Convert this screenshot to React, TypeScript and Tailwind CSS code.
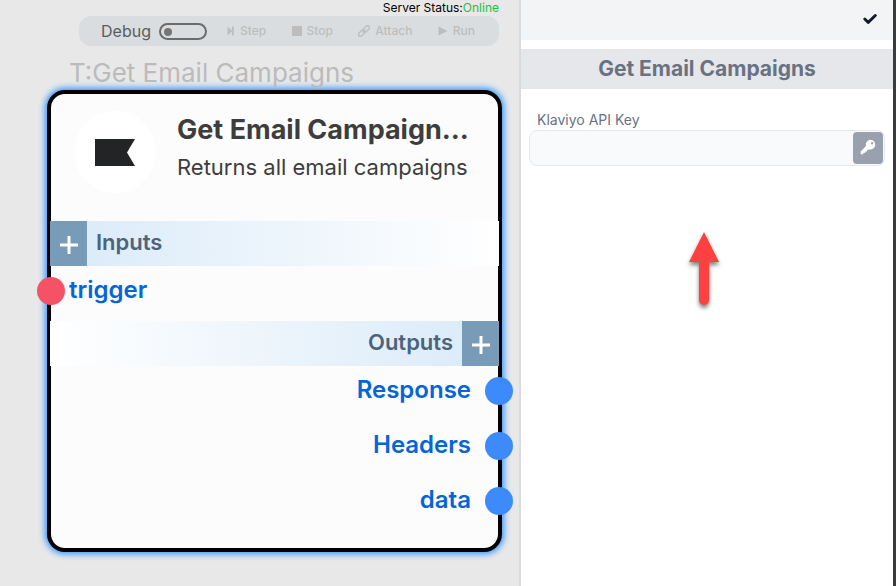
import type { ReactNode } from "react";
import { FaCheck } from "react-icons/fa6";

function StepIcon() {
  return (
    <svg viewBox="0 0 8 10" className="h-2.5 w-2" fill="currentColor">
      <path d="M0.500 0.500 5.500 5 0.500 9.500zM5 0.500h1.800v9H5z" />
    </svg>
  );
}

function StopIcon() {
  return (
    <svg viewBox="0 0 10 10" className="size-2.5" fill="currentColor">
      <path d="M0 0h10v10H0z" />
    </svg>
  );
}

function AttachIcon() {
  return (
    <svg viewBox="0 0 12 12" className="size-3" fill="none" stroke="currentColor" strokeWidth="1.3">
      <rect x="4.600" y="1.800" width="7.400" height="4" rx="2" transform="rotate(-45 8.300 3.800)" />
      <rect x="0" y="6.200" width="7.400" height="4" rx="2" transform="rotate(-45 3.700 8.200)" />
      <path d="M4.500 7.500l3-3" />
    </svg>
  );
}

function RunIcon() {
  return (
    <svg viewBox="0 0 10 10" className="size-2.5" fill="currentColor">
      <path d="M0.500 0.500 9.500 5 0.500 9.500z" />
    </svg>
  );
}

function KeyIcon() {
  return (
    <svg viewBox="0 0 16 16" className="size-4" fill="currentColor" fillRule="evenodd">
      <path d="M10.500 0.800a4.900 4.900 0 1 1-1.600 9.600L7.300 11.100 7 12.400 5.600 12.600 5.200 13.800 3.600 14 2.900 15.200H0.700V12.600L6 6.900A4.900 4.900 0 0 1 10.500 0.800zM12.100 3a1.200 1.200 0 1 0 0.010 0z" />
    </svg>
  );
}

const tools: { label: string; icon: ReactNode }[] = [
  { label: "Step", icon: <StepIcon /> },
  { label: "Stop", icon: <StopIcon /> },
  { label: "Attach", icon: <AttachIcon /> },
  { label: "Run", icon: <RunIcon /> },
];

const outputs = ["Response", "Headers", "data"];

function Toolbar() {
  return (
    <div className="flex h-[30px] items-center rounded-xl bg-[#d9dde0] pr-6 pl-[22px]">
      <label className="flex items-center gap-2 text-base text-[#5c5c5c]">
        Debug
        <input
          type="checkbox"
          role="switch"
          className="h-[17px] w-12 appearance-none rounded-full border-2 border-[#6b6b6b] before:m-[3px] before:block before:size-2 before:rounded-full before:bg-[#757575]"
        />
      </label>
      <div className="flex flex-1 items-center justify-between pl-5">
        {tools.map((tool) => (
          <button
            key={tool.label}
            type="button"
            disabled
            className="flex items-center gap-[5px] text-xs font-medium text-[#bdbdbd]"
          >
            {tool.icon}
            {tool.label}
          </button>
        ))}
      </div>
    </div>
  );
}

function AddButton({ label }: { label: string }) {
  return (
    <button
      type="button"
      aria-label={label}
      className="flex h-full w-[37px] items-center justify-center bg-[#789bb7] pt-0.5 text-white"
    >
      <svg viewBox="0 0 18 18" className="size-[18px]" fill="none" stroke="currentColor" strokeWidth="3">
        <path d="M9 0v18M0 9h18" />
      </svg>
    </button>
  );
}

function NodeCard() {
  return (
    <article className="h-[462px] rounded-[18px] border-4 border-black bg-[#fcfcfc] shadow-[0_0_6px_2px_#2f95ff]">
      <header className="flex h-[127px] items-start gap-[21px] pt-[17px] pr-5 pl-[23px]">
        <div className="flex size-[82px] shrink-0 items-center justify-center rounded-full bg-white">
          <svg viewBox="0 0 40 27" className="h-[27px] w-10" fill="#232426">
            <path d="M0 0h40l-8 13.500 8 13.500H0z" />
          </svg>
        </div>
        <div className="min-w-0 text-[#3d3d3d]">
          <h2 className="text-[27px] leading-[38px] font-bold">Get Email Campaign...</h2>
          <p className="text-[22px] leading-9">Returns all email campaigns</p>
        </div>
      </header>
      <section>
        <div className="-mx-px flex h-[45px] items-center gap-[9px] bg-linear-to-r from-[#d9eaf8] to-white">
          <AddButton label="Add input" />
          <h3 className="pb-0.5 text-[22px] font-semibold text-[#4c647b]">Inputs</h3>
        </div>
        <div className="-ml-[14px] flex h-[50px] items-center gap-1">
          <span className="size-7 rounded-full bg-[#f55266]" />
          <span className="pb-[3px] text-2xl font-semibold text-[#0565d8]">trigger</span>
        </div>
      </section>
      <section className="mt-[5px]">
        <div className="-mx-px flex h-[45px] items-center justify-end gap-[9px] bg-linear-to-l from-[#d9eaf8] to-white">
          <h3 className="pb-0.5 text-[22px] font-semibold text-[#4c647b]">Outputs</h3>
          <AddButton label="Add output" />
        </div>
        <ul className="-mr-[15px] flex flex-col gap-[5px]">
          {outputs.map((name) => (
            <li key={name} className="flex h-[50px] items-center justify-end gap-3.5">
              <span className="pb-[3px] text-2xl font-semibold text-[#0565d8]">{name}</span>
              <span className="size-7 rounded-full bg-[#3d8bfa]" />
            </li>
          ))}
        </ul>
      </section>
    </article>
  );
}

function SettingsPanel() {
  return (
    <aside className="w-[377px] shrink-0 border-r-3 border-l-2 border-r-[#3b3b3b] border-l-[#d8dce1] bg-white">
      <div className="flex h-10 items-center justify-end bg-gray-100 pr-4 pb-0.5">
        <button type="button" aria-label="Done" className="text-gray-900">
          <FaCheck className="size-3.5 stroke-current stroke-[40]" />
        </button>
      </div>
      <h1 className="mt-[9px] bg-gray-200 text-center text-[21px] leading-10 font-bold text-gray-500">
        Get Email Campaigns
      </h1>
      <div className="mt-5 px-2">
        <label htmlFor="api-key" className="block px-2 text-sm leading-[21px] text-gray-500">
          Klaviyo API Key
        </label>
        <div className="flex h-9 items-center rounded-lg border border-gray-200 bg-gray-50 pr-px">
          <input id="api-key" type="text" className="h-full min-w-0 flex-1 bg-transparent px-2 text-sm outline-none" />
          <button
            type="button"
            aria-label="Choose a key"
            className="flex h-8 w-[30px] items-center justify-center rounded bg-gray-400 pb-0.5 text-white"
          >
            <KeyIcon />
          </button>
        </div>
      </div>
      <div className="flex justify-center pt-[62px] pr-1.5">
        <svg
          viewBox="0 0 40 84"
          className="h-[84px] w-10 drop-shadow-[0_3px_2px_rgba(0,0,0,0.5)]"
          fill="#ff4040"
        >
          <path d="M20 4 35 34H25V72a5 5 0 0 1-10 0V34H5z" />
        </svg>
      </div>
    </aside>
  );
}

export default function App() {
  return (
    <div className="flex min-h-screen font-['Inter',sans-serif]">
      <main className="min-w-0 flex-1 bg-[#e8e8e8] pr-[17px] pl-[47px]">
        <div className="pr-[3px] pl-8">
          <p className="text-right text-xs leading-4 text-black">
            Server Status:<span className="text-[#21c045]">Online</span>
          </p>
          <Toolbar />
        </div>
        <p className="h-11 pl-[22px] text-[26px] leading-[54px] text-[#bbbbbb]">T:Get Email Campaigns</p>
        <NodeCard />
      </main>
      <SettingsPanel />
    </div>
  );
}
